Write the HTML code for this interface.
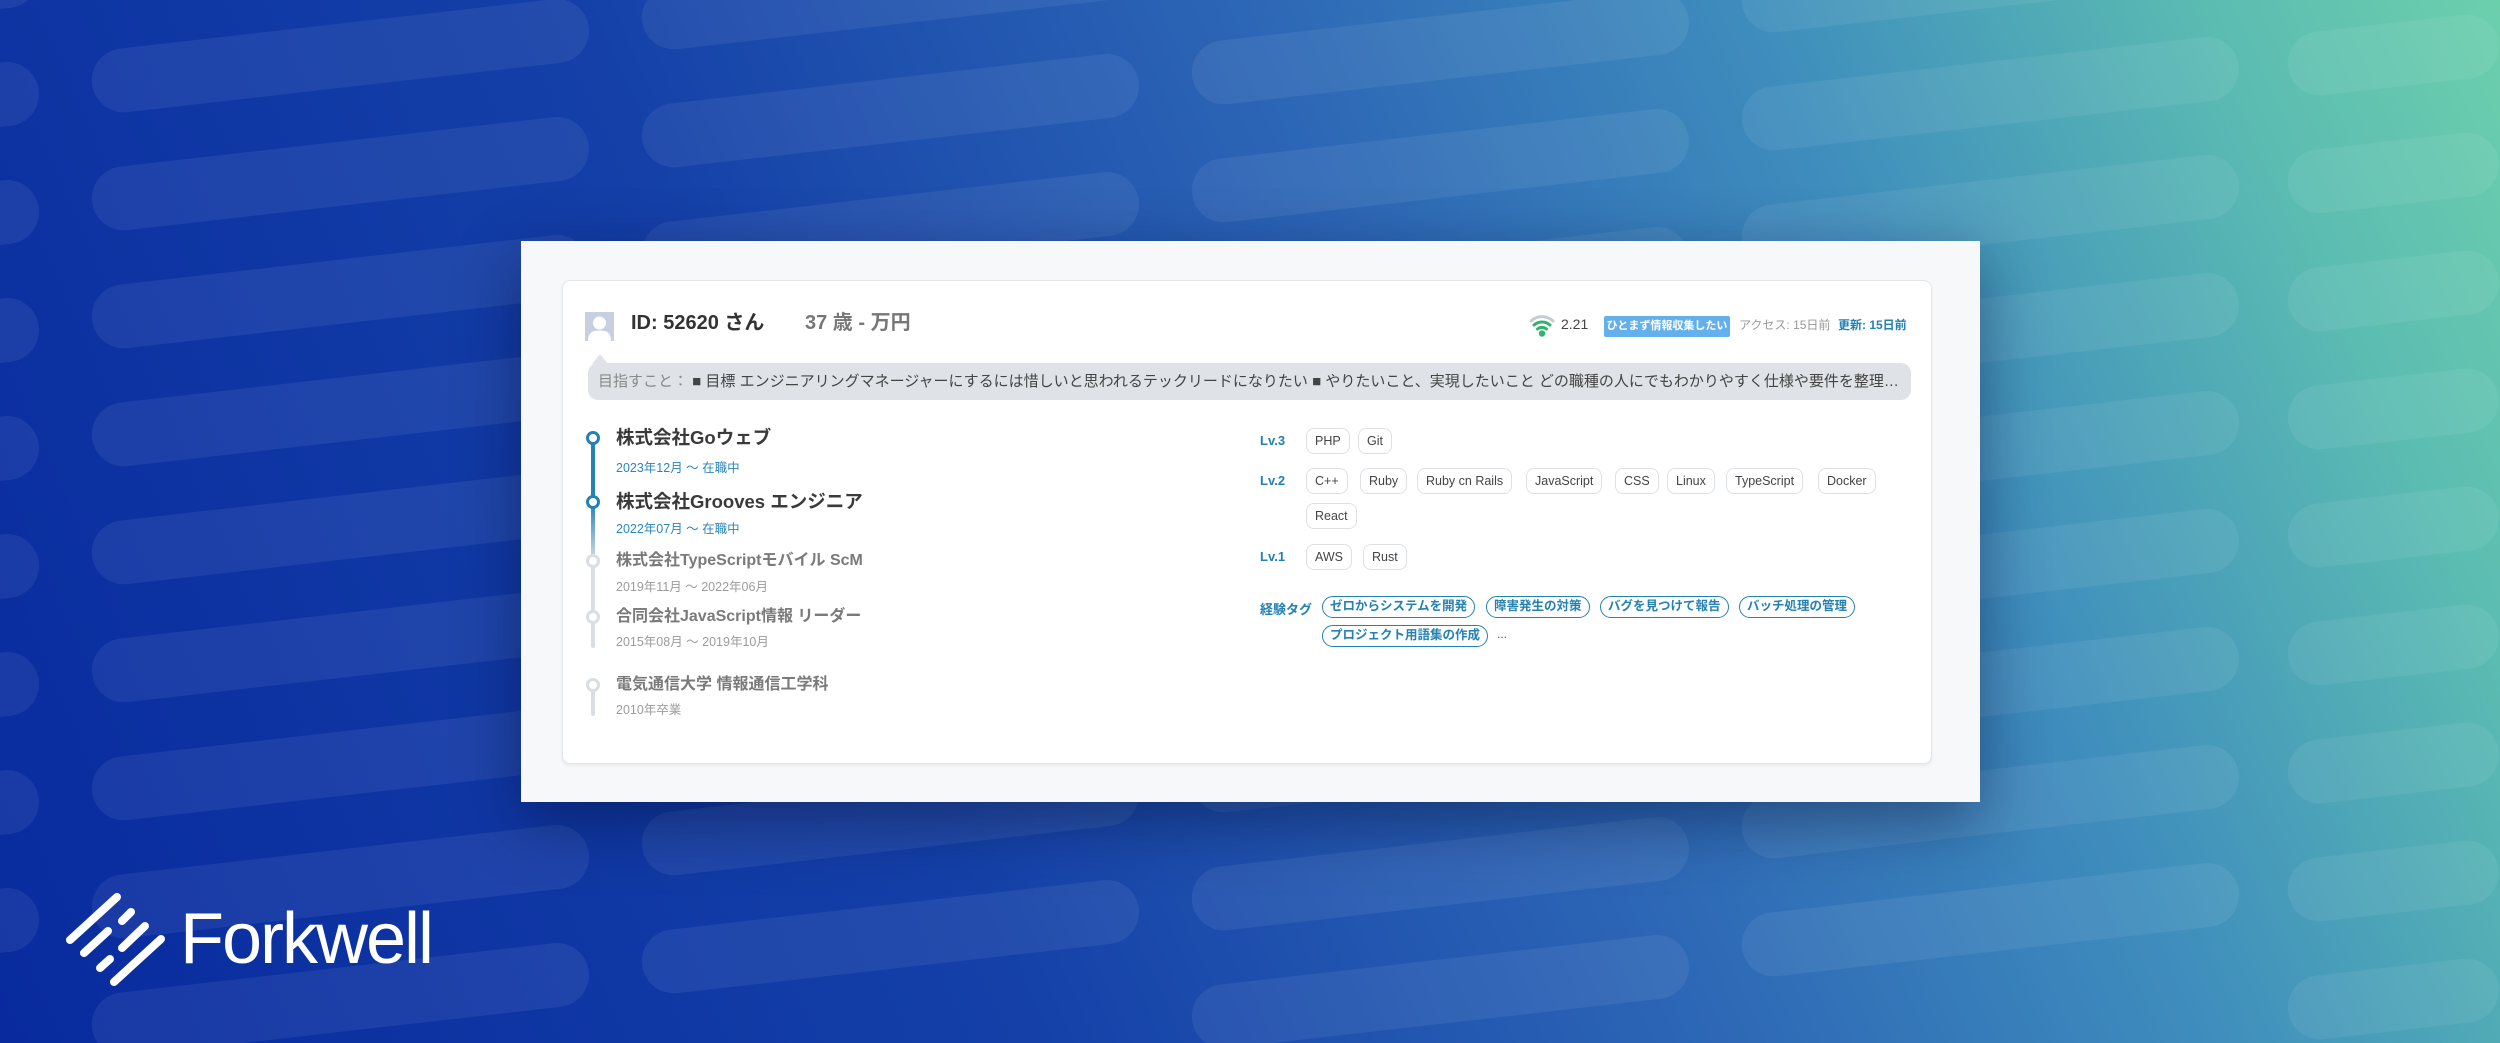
<!DOCTYPE html>
<html style="width:2500px;height:1043px;overflow:hidden"><head><meta charset="utf-8">
<style>
*{margin:0;padding:0;box-sizing:border-box}
html,body{width:2500px;height:1043px;overflow:hidden}
body{position:relative;font-family:"Liberation Sans","Noto Sans CJK JP",sans-serif;
background:linear-gradient(66deg,#082a9e 0%,#1440a8 35%,#2d67b6 58%,#3f8ebd 75%,#5bbcb2 90%,#6ccfac 100%) no-repeat;background-size:2500px 1043px}
#bg{position:absolute;left:0;top:0;width:2500px;height:1043px;overflow:hidden;clip-path:inset(0 0 0 0)}
.p{position:absolute;width:500px;height:64px;border-radius:32px;background:rgba(255,255,255,0.065);transform-origin:0 50%;transform:rotate(-6.5deg)}
.a{position:absolute;white-space:nowrap}
.panel{position:absolute;left:521px;top:241px;width:1459px;height:561px;background:#f7f8fa;box-shadow:0 20px 60px rgba(0,10,50,0.45)}
.card{position:absolute;left:562px;top:280px;width:1370px;height:484px;background:#fff;border:1px solid #e2e5e9;border-radius:8px;box-shadow:0 2px 3px rgba(0,0,0,0.06)}
.chip{position:absolute;height:26px;line-height:24px;border:1px solid #dde1e6;border-radius:8px;padding:0 8px;font-size:12.5px;color:#444}
.tag{position:absolute;height:22px;line-height:19px;border:1.5px solid #2481b3;border-radius:11px;padding:0 7px;font-size:12.5px;font-weight:bold;color:#2481b3}
.lv{position:absolute;font-size:13px;font-weight:bold;color:#2481b3}
.co{position:absolute;left:616px;font-weight:bold;white-space:nowrap}
.dt{position:absolute;left:616px;font-size:12.5px;white-space:nowrap}
.dot{position:absolute;left:586px;width:14px;height:14px;border-radius:50%;background:#fff;border:3px solid #2481b3}
.dot.g{border-color:#d9dee4}
</style></head><body>
<div id="bg"></div>
<div class="panel"></div>
<div class="card"></div>

<svg class="a" style="left:585px;top:312px" width="29" height="29" viewBox="0 0 29 29"><rect width="29" height="29" fill="#c7cfe2"/><circle cx="14.5" cy="11" r="6.5" fill="#fff"/><path d="M3 29 C3 20 8 18.5 14.5 18.5 C21 18.5 26 20 26 29 Z" fill="#fff"/></svg>
<svg class="a" style="left:592px;top:354px" width="16" height="10"><path d="M0 10 L8 0 L16 10Z" fill="#dfe3e7"/></svg>
<div class="a" style="left:631px;top:310px;font-size:20px;font-weight:bold;color:#333;line-height:26px">ID: 52620 さん</div>
<div class="a" style="left:805px;top:310px;font-size:20px;font-weight:bold;color:#777;line-height:26px">37 歳 - 万円</div>

<svg class="a" style="left:1529px;top:313px" width="26" height="24" viewBox="0 0 26 24"><path d="M2 8 A16 16 0 0 1 24 8" stroke="#c8ccd2" stroke-width="3" fill="none" stroke-linecap="round"/><path d="M5 12 A12 12 0 0 1 21 12" stroke="#2fb56c" stroke-width="3" fill="none" stroke-linecap="round"/><path d="M8.5 16 A7 7 0 0 1 17.5 16" stroke="#2fb56c" stroke-width="3" fill="none" stroke-linecap="round"/><circle cx="13" cy="20.5" r="3.2" fill="#2fb56c"/></svg>
<div class="a" style="left:1561px;top:315px;font-size:14px;color:#444;line-height:18px">2.21</div>
<div class="a" style="left:1604px;top:316px;width:126px;height:21px;background:#63b0ec;border-radius:2px;color:#fff;font-size:11px;font-weight:bold;line-height:21px;text-align:center">ひとまず情報収集したい</div>
<div class="a" style="left:1739px;top:317px;font-size:12px;color:#999;line-height:16px">アクセス: 15日前</div>
<div class="a" style="left:1838px;top:317px;font-size:12px;color:#2481b3;font-weight:bold;line-height:16px">更新: 15日前</div>

<div class="a" style="left:588px;top:363px;width:1323px;height:37px;background:#dfe3e7;border-radius:10px;padding:0 10px;font-size:15px;line-height:37px;color:#444;overflow:hidden;text-overflow:ellipsis"><span style="color:#888">目指すこと：</span> ■ 目標 エンジニアリングマネージャーにするには惜しいと思われるテックリードになりたい ■ やりたいこと、実現したいこと どの職種の人にでもわかりやすく仕様や要件を整理して伝えることができるエンジニア</div>

<div class="a" style="left:591px;top:440px;width:4px;height:62px;background:#2481b3"></div>
<div class="a" style="left:591px;top:502px;width:4px;height:60px;background:linear-gradient(#2481b3,#d9dee4)"></div>
<div class="a" style="left:591px;top:560px;width:4px;height:88px;background:#d9dee4;border-radius:0 0 2px 2px"></div>
<div class="a" style="left:591px;top:686px;width:4px;height:30px;background:#d9dee4;border-radius:2px"></div>
<div class="dot" style="top:431px"></div>
<div class="dot" style="top:495px"></div>
<div class="dot g" style="top:554px"></div>
<div class="dot g" style="top:610px"></div>
<div class="dot g" style="top:678px"></div>

<div class="co" style="top:426px;font-size:18.5px;color:#3a3a3a;line-height:24px">株式会社Goウェブ</div>
<div class="dt" style="top:459px;color:#2a86b8;line-height:18px">2023年12月 〜 在職中</div>
<div class="co" style="top:490px;font-size:18.5px;color:#3a3a3a;line-height:24px">株式会社Grooves エンジニア</div>
<div class="dt" style="top:520px;color:#2a86b8;line-height:18px">2022年07月 〜 在職中</div>
<div class="co" style="top:550px;font-size:16px;color:#7a7a7a;line-height:22px">株式会社TypeScriptモバイル ScM</div>
<div class="dt" style="top:578px;color:#9b9b9b;line-height:18px">2019年11月 〜 2022年06月</div>
<div class="co" style="top:606px;font-size:16px;color:#7a7a7a;line-height:22px">合同会社JavaScript情報 リーダー</div>
<div class="dt" style="top:633px;color:#9b9b9b;line-height:18px">2015年08月 〜 2019年10月</div>
<div class="co" style="top:674px;font-size:16px;color:#7a7a7a;line-height:22px">電気通信大学 情報通信工学科</div>
<div class="dt" style="top:701px;color:#9b9b9b;line-height:18px">2010年卒業</div>

<div class="lv" style="left:1260px;top:433px">Lv.3</div>
<div class="chip" style="left:1306px;top:428px">PHP</div>
<div class="chip" style="left:1358px;top:428px">Git</div>
<div class="lv" style="left:1260px;top:473px">Lv.2</div>
<div class="chip" style="left:1306px;top:468px">C++</div>
<div class="chip" style="left:1360px;top:468px">Ruby</div>
<div class="chip" style="left:1417px;top:468px">Ruby cn Rails</div>
<div class="chip" style="left:1526px;top:468px">JavaScript</div>
<div class="chip" style="left:1615px;top:468px">CSS</div>
<div class="chip" style="left:1667px;top:468px">Linux</div>
<div class="chip" style="left:1726px;top:468px">TypeScript</div>
<div class="chip" style="left:1818px;top:468px">Docker</div>
<div class="chip" style="left:1306px;top:503px">React</div>
<div class="lv" style="left:1260px;top:549px">Lv.1</div>
<div class="chip" style="left:1306px;top:544px">AWS</div>
<div class="chip" style="left:1363px;top:544px">Rust</div>
<div class="lv" style="left:1260px;top:599px">経験タグ</div>
<div class="tag" style="left:1322px;top:596px">ゼロからシステムを開発</div>
<div class="tag" style="left:1486px;top:596px">障害発生の対策</div>
<div class="tag" style="left:1600px;top:596px">バグを見つけて報告</div>
<div class="tag" style="left:1739px;top:596px">バッチ処理の管理</div>
<div class="tag" style="left:1322px;top:625px">プロジェクト用語集の作成</div>
<div class="a" style="left:1497px;top:627px;font-size:12px;color:#555">...</div>

<svg class="a" style="left:0;top:850px" width="180" height="150" viewBox="0 850 180 150" stroke="#fff" stroke-width="8" stroke-linecap="round" fill="none">
<path d="M70 940 L117 897"/><path d="M122 921 L131 912"/><path d="M84 953 L108 931"/><path d="M122 948 L145 926"/><path d="M100 968 L110 959"/><path d="M114 982 L161 939"/>
</svg>
<div class="a" style="left:180px;top:903px;font-size:72px;line-height:72px;color:#fff;letter-spacing:-2px">Forkwell</div>

<script>
var bg=document.getElementById('bg'),h='';
var cols=[[-458,83],[92,20],[642,75],[1192,12],[1742,58],[2288,3]];
cols.forEach(function(c){for(var y=c[1]-236;y<980;y+=118){var w=(c[0]+500>2500)?(2500-c[0]):500;h+='<div class="p" style="left:'+c[0]+'px;top:'+(y+32)+'px;width:'+w+'px"></div>';}});
bg.innerHTML=h;
</script>
</body></html>
